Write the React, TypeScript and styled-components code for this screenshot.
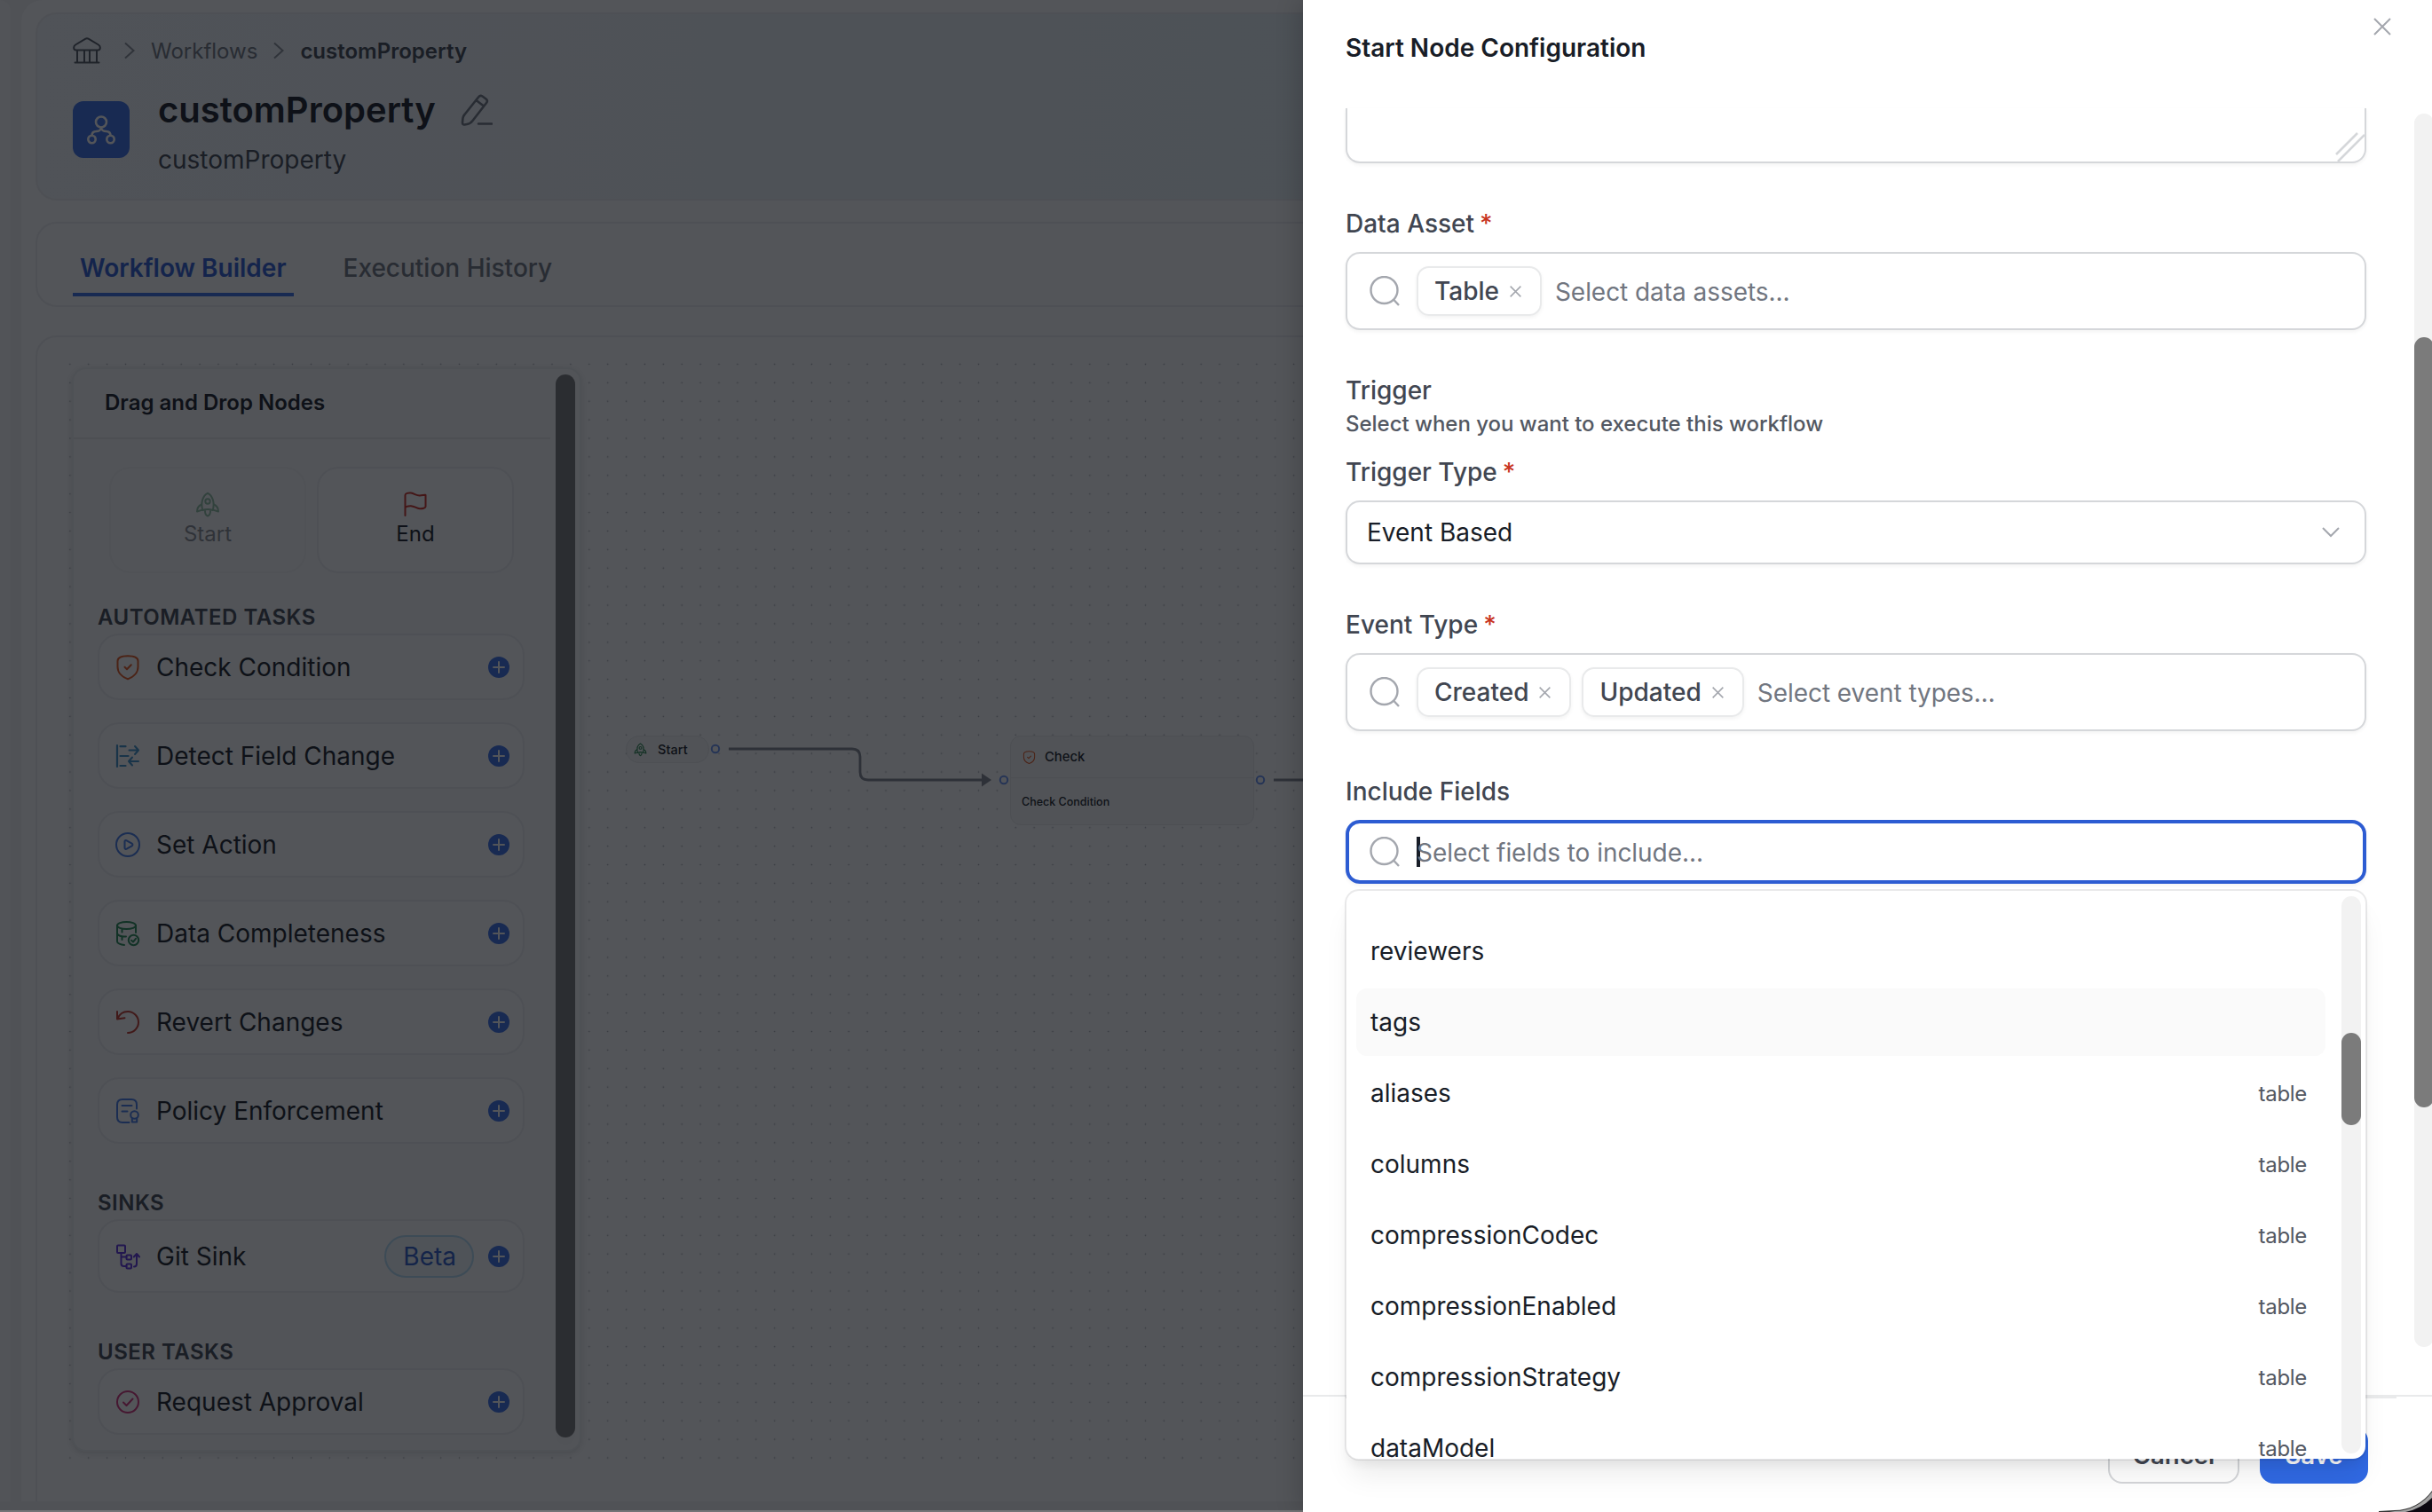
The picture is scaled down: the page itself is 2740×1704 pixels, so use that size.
import React, { useState } from 'react'
import styled, { createGlobalStyle, css } from 'styled-components'

const Colors = {
    textDark: '#181d27',
    textSecondary: '#414651',
    textTertiary: '#535862',
    placeholder: '#717680',
    border: '#d5d7da',
    borderLight: '#e9eaeb',
    brand: '#2d5cd2',
    brandSolid: '#396ee7',
    iconGray: '#a4a7ae',
    error: '#c8341f',
    scrollTrack: '#f2f2f2',
    scrollThumb: '#7b7b7b',
}

type NodeIcon = 'rocket' | 'flag' | 'shield' | 'detect' | 'play' | 'database' | 'revert' | 'policy' | 'git' | 'approve'

const iconColors: Record<NodeIcon, string> = {
    rocket: '#26834b',
    flag: '#cc2d22',
    shield: '#e5581f',
    detect: '#3d92c9',
    play: '#437be6',
    database: '#278a55',
    revert: '#c2362a',
    policy: '#437be6',
    git: '#5c30dc',
    approve: '#d23078',
}

const NodeGlyph: React.FC<{ icon: NodeIcon, size?: number }> = ({ icon, size = 32 }) => (
    <svg
        width={size}
        height={size}
        viewBox="0 0 32 32"
        fill="none"
        stroke={iconColors[icon]}
        strokeWidth={2}
        strokeLinecap="round"
        strokeLinejoin="round"
    >
        {icon === 'rocket' && <>
            <path d="M10.2 23C8 14 10.500 6.500 16 3.800C21.500 6.500 24 14 21.800 23C18 21.600 14 21.600 10.200 23Z" />
            <circle cx="16" cy="13" r="2.700" />
            <path d="M9 16.500C5.500 18 4 20.500 4 24.500L10 22.600M23 16.500C26.500 18 28 20.500 28 24.500L22 22.600M13 24C13 27 14.500 29 16 29.500C17.500 29 19 27 19 24" />
        </>}
        {icon === 'flag' && <path d="M4.500 29V6C4.500 4 8 3.200 11 3.600C15 4.200 17 6.600 21 6.400C24 6.300 27.500 5.200 27.500 6V19C27.500 20.500 24 21.400 21 21.200C17 21 15 18.400 11 18.200C7 18 4.500 19.500 4.500 21" />}
        {icon === 'shield' && <>
            <path d="M4.500 9C4.500 5 8 3.200 16 3.200S27.500 5 27.500 9V15.500C27.500 22 22.500 27 16 29.200C9.500 27 4.500 22 4.500 15.500Z" />
            <path d="M12.500 15.800L15 18.300L19.800 13.300" />
        </>}
        {icon === 'detect' && <>
            <path d="M4 4V28M7.500 5.200H13.500M7.500 16H16.500M7.500 27H13.500" strokeWidth="2.200" />
            <path d="M17.500 9.500H28M24 5L28 9.500L24 14M28 22H17M21 17.500L17 22L21 26.500" />
        </>}
        {icon === 'play' && <>
            <circle cx="16" cy="16" r="13" />
            <path d="M12.500 12.500C12.500 11.300 13.700 10.800 14.700 11.300L20.600 14.700C21.700 15.400 21.700 16.600 20.600 17.300L14.700 20.700C13.700 21.200 12.500 20.700 12.500 19.500Z" />
        </>}
        {icon === 'database' && <>
            <ellipse cx="14.500" cy="7" rx="10.500" ry="4" />
            <path d="M4 7V25C4 27.200 8 28.700 12 28.900M25 7V15M4 16.500C6 18.800 10 19.800 14 19.400M9.500 11.500V14.500M9.500 20.500V23" />
            <circle cx="22.500" cy="23.500" r="5.700" />
            <path d="M20 23.700L22 25.500L25 21.800" />
        </>}
        {icon === 'revert' && <path d="M4 4V12.500L12.500 11.200M4.500 12C6.500 7 11 4 16 4C22.500 4 28 9.400 28 16S22.500 28 16 28" />}
        {icon === 'policy' && <>
            <path d="M17.500 29H10C6 29 4 27 4 23V9C4 5 6 3 10 3H20C24 3 26 5 26 9V13.500M9.500 10H20.500M9.500 16.500H15.500" />
            <circle cx="23.500" cy="20.500" r="4.300" />
            <path d="M20.800 24.200V28.500H26.200V24.200" />
        </>}
        {icon === 'git' && <>
            <rect x="4" y="3.500" width="9" height="8.500" rx="1" />
            <path d="M8.500 12V24C8.500 26 9.500 27 11.500 27H14.500M8.500 16.500H14.500M23 27.500C25.500 27.500 26 26 26 24V14M22.800 16.500L26 13L29 16.500" />
            <rect x="14.500" y="14.500" width="5.500" height="5" rx="1" />
            <rect x="14.500" y="24.500" width="5.500" height="5" rx="1" />
        </>}
        {icon === 'approve' && <>
            <circle cx="16" cy="16" r="12" />
            <path d="M11 16.500L14.500 20L21.500 12.500" />
        </>}
    </svg>
)

const PlusIcon: React.FC = () => (
    <svg width="24" height="24" viewBox="0 0 24 24">
        <circle cx="12" cy="12" r="12" fill={Colors.brandSolid} />
        <path d="M12 6V18M6 12H18" stroke="#fff" strokeWidth="2" strokeLinecap="round" />
    </svg>
)

const ChevronIcon: React.FC = () => (
    <svg width="12" height="20" viewBox="0 0 12 20" fill="none" stroke="#8b8f98" strokeWidth="2">
        <path d="M1 1.500L10.500 10L1 18.500" />
    </svg>
)

const SearchIcon: React.FC = () => (
    <svg width="34" height="34" viewBox="0 0 34 34" fill="none" stroke={Colors.iconGray} strokeWidth="2.400">
        <circle cx="16.500" cy="16" r="15" />
        <path d="M27 26.500L33 33" />
    </svg>
)

const CloseIcon: React.FC<{ size: number }> = ({ size }) => (
    <svg width={size} height={size} viewBox="0 0 20 20" fill="none" stroke={Colors.iconGray} strokeWidth={size > 16 ? 2 : 2.4}>
        <path d="M1 1L19 19M19 1L1 19" />
    </svg>
)

interface ITask {
    label: string
    icon: NodeIcon
    beta?: boolean
}

const taskGroups: { title: string, tasks: ITask[] }[] = [
    {
        title: 'AUTOMATED TASKS',
        tasks: [
            { label: 'Check Condition', icon: 'shield' },
            { label: 'Detect Field Change', icon: 'detect' },
            { label: 'Set Action', icon: 'play' },
            { label: 'Data Completeness', icon: 'database' },
            { label: 'Revert Changes', icon: 'revert' },
            { label: 'Policy Enforcement', icon: 'policy' },
        ],
    },
    { title: 'SINKS', tasks: [{ label: 'Git Sink', icon: 'git', beta: true }] },
    { title: 'USER TASKS', tasks: [{ label: 'Request Approval', icon: 'approve' }] },
]

const fieldOptions = [
    { name: 'reviewers' },
    { name: 'tags' },
    { name: 'aliases', source: 'table' },
    { name: 'columns', source: 'table' },
    { name: 'compressionCodec', source: 'table' },
    { name: 'compressionEnabled', source: 'table' },
    { name: 'compressionStrategy', source: 'table' },
    { name: 'dataModel', source: 'table' },
]

interface IMultiSelectProps {
    tags: string[]
    placeholder: string
    onRemove?: (tag: string) => void
    focused?: boolean
    children?: React.ReactNode
}

const MultiSelect: React.FC<IMultiSelectProps> = ({
    tags,
    placeholder,
    onRemove = () => { },
    focused = false,
    children
}) => (
    <SelectBox $tall={tags.length > 0} $focused={focused}>
        <SearchIcon />
        <TagList>
            {tags.map((tag) => (
                <Tag key={tag}>
                    {tag}
                    <TagRemove onClick={() => onRemove(tag)}><CloseIcon size={13} /></TagRemove>
                </Tag>
            ))}
            {focused && <Caret />}
            <Placeholder $afterTag={tags.length > 0}>{placeholder}</Placeholder>
        </TagList>
        {children}
    </SelectBox>
)

const NodePalette: React.FC = () => (
    <Palette>
        <PaletteContent>
            <PaletteHeader>Drag and Drop Nodes</PaletteHeader>
            <TerminalRow>
                <TerminalCard $disabled><NodeGlyph icon="rocket" />Start</TerminalCard>
                <TerminalCard><NodeGlyph icon="flag" />End</TerminalCard>
            </TerminalRow>
            {taskGroups.map((group) => (
                <TaskGroup key={group.title}>
                    <GroupTitle>{group.title}</GroupTitle>
                    {group.tasks.map((task) => (
                        <TaskCard key={task.label} $tall={task.beta}>
                            <NodeGlyph icon={task.icon} />
                            <TaskLabel>{task.label}</TaskLabel>
                            {task.beta && <BetaBadge>Beta</BetaBadge>}
                            <PlusIcon />
                        </TaskCard>
                    ))}
                </TaskGroup>
            ))}
        </PaletteContent>
        <PaletteScroll><PaletteThumb /></PaletteScroll>
    </Palette>
)

const FlowCanvas: React.FC = () => (
    <Canvas>
        <NodePalette />
        <Edges width="760" height="120" viewBox="708 820 760 120" fill="none">
            <path d="M821 844H960Q969 844 969 853V870Q969 879 978 879H1112" stroke="#83878f" strokeWidth="2.800" />
            <path d="M1106 871.500L1117 879L1106 886.500Z" fill="#83878f" />
            <path d="M1435 879H1468" stroke="#83878f" strokeWidth="2.800" />
            <g stroke="#6590f2" strokeWidth="2" fill="#fff">
                <circle cx="806" cy="844" r="4.200" />
                <circle cx="1131" cy="879" r="4.200" />
                <circle cx="1420" cy="879" r="4.200" />
            </g>
        </Edges>
        <StartNode><NodeGlyph icon="rocket" size={17} />Start</StartNode>
        <CheckNode>
            <CheckNodeHeader><NodeGlyph icon="shield" size={17} />Check</CheckNodeHeader>
            <CheckNodeBody>Check Condition</CheckNodeBody>
        </CheckNode>
    </Canvas>
)

const ConfigDrawer: React.FC = () => {
    const [assets, setAssets] = useState<string[]>(['Table'])
    const [events, setEvents] = useState<string[]>(['Created', 'Updated'])
    const [active, setActive] = useState<string>('tags')

    return (
        <Drawer>
            <DrawerHeader>
                <DrawerTitle>Start Node Configuration</DrawerTitle>
                <CloseButton><CloseIcon size={20} /></CloseButton>
            </DrawerHeader>
            <DrawerBody>
                <Form>
                    <DescriptionBox>
                        <svg width="34" height="34" viewBox="0 0 34 34" stroke={Colors.border} strokeWidth="2.600">
                            <path d="M2 26L26 2M4 34L34 4" />
                        </svg>
                    </DescriptionBox>
                    <Label>Data Asset<Required>*</Required></Label>
                    <MultiSelect
                        tags={assets}
                        placeholder="Select data assets..."
                        onRemove={(tag) => setAssets(assets.filter((a) => a !== tag))} />
                    <SectionTitle>Trigger</SectionTitle>
                    <SectionHint>Select when you want to execute this workflow</SectionHint>
                    <Label $tight>Trigger Type<Required>*</Required></Label>
                    <SingleSelect>
                        Event Based
                        <svg width="20" height="12" viewBox="0 0 20 12" fill="none" stroke={Colors.iconGray} strokeWidth="2">
                            <path d="M1 1L10 10L19 1" />
                        </svg>
                    </SingleSelect>
                    <Label>Event Type<Required>*</Required></Label>
                    <MultiSelect
                        tags={events}
                        placeholder="Select event types..."
                        onRemove={(tag) => setEvents(events.filter((e) => e !== tag))} />
                    <Label>Include Fields</Label>
                    <MultiSelect tags={[]} placeholder="Select fields to include..." focused>
                        <Dropdown>
                            <OptionList>
                                {fieldOptions.map(({ name, source }) => (
                                    <Option key={name} $active={name === active} onMouseEnter={() => setActive(name)}>
                                        {name}
                                        {source && <OptionSource>{source}</OptionSource>}
                                    </Option>
                                ))}
                            </OptionList>
                            <DropdownScroll><DropdownThumb /></DropdownScroll>
                        </Dropdown>
                    </MultiSelect>
                </Form>
                <DrawerScroll><DrawerThumb /></DrawerScroll>
            </DrawerBody>
            <DrawerFooter>
                <FooterRule />
                <FooterActions>
                    <Button>Cancel</Button>
                    <Button $primary>Save</Button>
                </FooterActions>
            </DrawerFooter>
        </Drawer>
    )
}

const App: React.FC = () => (
    <Screen>
        <GlobalStyle />
        <Shell>
            <SideRail />
            <Main>
                <HeaderCard>
                    <Breadcrumb>
                        <svg width="32" height="30" viewBox="0 0 32 30" fill="none" stroke={Colors.textTertiary} strokeWidth="2" strokeLinecap="round">
                            <path d="M3.500 14.500C0.500 14.500 0.500 10 3 8.500L14 1.800Q16 .8 18 1.800L29 8.500C31.500 10 31.500 14.500 28.500 14.500ZM5 15V28M13 15V28M19 15V28M27 15V28M2.500 28.500H29.500" />
                        </svg>
                        <ChevronIcon />
                        <Crumb>Workflows</Crumb>
                        <ChevronIcon />
                        <Crumb $current>customProperty</Crumb>
                    </Breadcrumb>
                    <TitleRow>
                        <TitleTile>
                            <svg width="34" height="34" viewBox="0 0 34 34" fill="none" stroke="#fff" strokeWidth="2.600">
                                <circle cx="17" cy="8.500" r="6" />
                                <circle cx="6.500" cy="28" r="4.200" />
                                <circle cx="27.500" cy="28" r="4.200" />
                                <path d="M17 14.500C17 17.500 14 19 11.500 19C8 19 6.500 21 6.500 23.800M17 14.500C17 17.500 20 19 22.500 19C26 19 27.500 21 27.500 23.800" />
                            </svg>
                        </TitleTile>
                        <div>
                            <Title>
                                customProperty
                                <svg width="36" height="36" viewBox="0 0 36 36" fill="none" stroke="#717680" strokeWidth="2.600" strokeLinecap="round" strokeLinejoin="round">
                                    <path d="M20 3.500Q22 1 24.500 2.500L28.500 5.500Q31 7.500 29 10L13.500 30Q11 33.500 7 34L4.500 34.500Q2 35 2 32L2.500 27Q3 24.500 4.500 23ZM17.500 7L26 13.500M20 33.500H35" />
                                </svg>
                            </Title>
                            <Subtitle>customProperty</Subtitle>
                        </div>
                    </TitleRow>
                </HeaderCard>
                <TabsCard>
                    <Tab $active>Workflow Builder</Tab>
                    <Tab>Execution History</Tab>
                </TabsCard>
                <CanvasCard>
                    <FlowCanvas />
                </CanvasCard>
            </Main>
        </Shell>
        <Mask />
        <ConfigDrawer />
        <WindowCorner width="70" height="70" viewBox="0 0 70 70">
            <path d="M10 69L27.500 68A52 52 0 0 0 70 46V70H10Z" fill="#333" />
            <path d="M22 70L28 69A53 53 0 0 0 70 47.500V70Z" fill="#a3a3a3" />
            <path d="M40 70A57 57 0 0 0 70 54V70Z" fill="#0b0810" />
        </WindowCorner>
    </Screen>
)

export default App

const GlobalStyle = createGlobalStyle`
    * {
        box-sizing: border-box;
    }

    body {
        margin: 0;
        font-family: Inter, "Liberation Sans", sans-serif;
        font-size: 28px;
        color: ${Colors.textDark};
    }
`

const Screen = styled.div`
    position: relative;
    width: 2740px;
    height: 1704px;
    overflow: hidden;
    background: #f3f3f4;
`

const Shell = styled.div`
    display: flex;
    gap: 12px;
    height: 1692px;
`

const SideRail = styled.div`
    flex: none;
    width: 12px;
    background: #fafafa;
    border-top-right-radius: 12px;
`

const Main = styled.main`
    flex: 1;
    padding: 14px 16px 0;
    overflow: hidden;
    background: #fdfdfd;
    border-top-left-radius: 24px;
`

const cardFrame = css`
    border: 2px solid #eeeff0;
    border-radius: 24px;
`

const HeaderCard = styled.section`
    ${cardFrame}
    height: 212px;
    padding: 23px 40px 0;
    background: linear-gradient(90deg, #f3f7fa 0%, #ecf3f8 50%, #e2eef6 100%);
`

const Breadcrumb = styled.nav`
    display: flex;
    align-items: center;
    height: 36px;
    font-size: 24px;

    svg:first-child {
        margin-right: 12px;
    }

    svg:not(:first-child) {
        margin: 0 18px 0 14px;
    }
`

const Crumb = styled.span<{ $current?: boolean }>`
    color: ${({ $current }) => ($current ? Colors.textSecondary : Colors.placeholder)};
    font-weight: ${({ $current }) => ($current ? 600 : 400)};

    & + svg {
        margin-left: 18px !important;
    }
`

const TitleRow = styled.div`
    display: flex;
    gap: 32px;
    margin-top: 25px;
`

const TitleTile = styled.div`
    display: flex;
    align-items: center;
    justify-content: center;
    width: 64px;
    height: 64px;
    margin-top: 14px;
    border-radius: 12px;
    background: ${Colors.brandSolid};
`

const Title = styled.h1`
    display: flex;
    align-items: center;
    gap: 28px;
    margin: 0;
    font-size: 40px;
    font-weight: 600;
    line-height: 48px;
`

const Subtitle = styled.div`
    margin-top: 10px;
    line-height: 44px;
    color: ${Colors.textSecondary};
`

const TabsCard = styled.section`
    ${cardFrame}
    display: flex;
    gap: 48px;
    height: 96px;
    margin-top: 24px;
    padding: 22px 40px 0;
`

const Tab = styled.div<{ $active?: boolean }>`
    height: 60px;
    padding: 0 8px;
    line-height: 57px;
    font-weight: ${({ $active }) => ($active ? 600 : 500)};
    color: ${({ $active }) => ($active ? Colors.brand : Colors.placeholder)};
    border-bottom: 4px solid ${({ $active }) => ($active ? Colors.brandSolid : 'transparent')};
`

const CanvasCard = styled.section`
    ${cardFrame}
    height: 1400px;
    margin-top: 32px;
    padding: 18px 23px;
`

const Canvas = styled.div`
    position: relative;
    display: flex;
    align-items: flex-start;
    height: 1258px;
    padding: 16px;
    background-image: radial-gradient(circle at center, #a4a7ad 0.6px, transparent 1.1px);
    background-size: 20.9px 20.9px;
    background-position: 3.4px 2px;
`

const Palette = styled.aside`
    display: flex;
    width: 574px;
    height: 1222px;
    background: #fbfbfb;
    border: 2px solid #eef0f1;
    border-radius: 16px;
    box-shadow: 0 2px 6px rgba(10, 13, 18, 0.12);
    overflow: hidden;
`

const PaletteContent = styled.div`
    width: 537px;
`

const PaletteHeader = styled.div`
    height: 79px;
    padding-left: 35px;
    line-height: 76px;
    font-size: 24px;
    font-weight: 600;
    border-bottom: 2px solid ${Colors.borderLight};
`

const TerminalRow = styled.div`
    display: flex;
    gap: 12px;
    padding: 31px 40px;
`

const TerminalCard = styled.div<{ $disabled?: boolean }>`
    display: flex;
    flex-direction: column;
    align-items: center;
    width: 222px;
    height: 120px;
    padding-top: 24px;
    font-size: 24px;
    line-height: 36px;
    background: #fdfdfd;
    border: 2px solid #eeeff0;
    border-radius: 24px;
    opacity: ${({ $disabled }) => ($disabled ? 0.5 : 1)};
`

const TaskGroup = styled.div`
    padding: 0 29px 0 27px;
    margin-bottom: 48px;
`

const GroupTitle = styled.div`
    height: 37px;
    line-height: 38px;
    font-size: 24px;
    font-weight: 600;
    letter-spacing: 0.5px;
    color: ${Colors.textSecondary};
`

const TaskCard = styled.div<{ $tall?: boolean }>`
    display: flex;
    align-items: center;
    height: ${({ $tall }) => ($tall ? 83 : 75)}px;
    padding: 0 15px 0 16px;
    background: #fdfdfd;
    border: 2px solid #eeeff0;
    border-radius: 24px;

    & + & {
        margin-top: 25px;
    }
`

const TaskLabel = styled.span`
    flex: 1;
    margin-left: 16px;
`

const BetaBadge = styled.span`
    height: 48px;
    margin-right: 16px;
    padding: 0 18px 0 19px;
    line-height: 45px;
    color: #2d5cc8;
    background: #f0f7fc;
    border: 2px solid #b4dcf4;
    border-radius: 24px;
`

const PaletteScroll = styled.div`
    width: 22px;
    height: 1206px;
    margin: 6px 0 0 6px;
    border-radius: 11px;
    background: #f7f7f7;
`

const PaletteThumb = styled.div`
    height: 1198px;
    border-radius: 11px;
    background: ${Colors.scrollThumb};
`

const Edges = styled.svg`
    position: absolute;
    left: 643px;
    top: 422px;
`

const flowNode = css`
    position: absolute;
    top: 431px;
    background: #f8f8f8;
    border: 1px solid ${Colors.borderLight};
    font-weight: 500;
`

const StartNode = styled.div`
    ${flowNode}
    left: 640px;
    display: flex;
    align-items: center;
    gap: 11px;
    width: 94px;
    height: 31px;
    padding-left: 7px;
    font-size: 14.6px;
    border-radius: 15px;
`

const CheckNode = styled.div`
    ${flowNode}
    left: 1073px;
    width: 275px;
    height: 101px;
    border-radius: 12px;
`

const CheckNodeHeader = styled.div`
    display: flex;
    align-items: center;
    gap: 9px;
    height: 47px;
    padding-left: 12px;
    font-size: 14.8px;
    border-bottom: 1px solid ${Colors.borderLight};
`

const CheckNodeBody = styled.div`
    padding-left: 12px;
    line-height: 54px;
    font-size: 12.5px;
`

const Mask = styled.div`
    position: absolute;
    inset: 0;
    background: rgba(10, 13, 18, 0.7);
    border-bottom: 2px solid rgba(255, 255, 255, 0.2);
`

const Drawer = styled.aside`
    position: absolute;
    top: 0;
    right: 0;
    display: flex;
    flex-direction: column;
    width: 1272px;
    height: 1704px;
    background: #fff;
    box-shadow: -6px 0 24px rgba(0, 0, 0, 0.16);
`

const DrawerHeader = styled.header`
    display: flex;
    justify-content: space-between;
    align-items: flex-start;
    height: 122px;
    padding: 0 46px 0 48px;
`

const DrawerTitle = styled.h2`
    margin: 34px 0 0;
    font-size: 28px;
    font-weight: 600;
    line-height: 40px;
`

const CloseButton = styled.button`
    display: flex;
    margin-top: 20px;
    padding: 0;
    border: 0;
    background: none;
    cursor: pointer;
`

const DrawerBody = styled.div`
    display: flex;
    height: 1450px;
`

const Form = styled.div`
    flex: 1;
    padding: 0 54px 0 48px;
`

const controlFrame = css`
    background: #fff;
    border: 2px solid ${Colors.border};
    border-radius: 16px;
    box-shadow: 0 2px 4px rgba(10, 13, 18, 0.05);
`

const DescriptionBox = styled.div`
    ${controlFrame}
    display: flex;
    justify-content: flex-end;
    align-items: flex-end;
    height: 62px;
    border-top: 0;
    border-top-left-radius: 0;
    border-top-right-radius: 0;
`

const Label = styled.div<{ $tight?: boolean }>`
    margin: ${({ $tight }) => ($tight ? 16 : 48)}px 0 12px;
    font-weight: 500;
    line-height: 40px;
    color: ${Colors.textSecondary};
`

const Required = styled.span`
    margin-left: 6px;
    color: ${Colors.error};
`

const SectionTitle = styled.div`
    margin-top: 48px;
    font-weight: 500;
    line-height: 40px;
    color: ${Colors.textSecondary};
`

const SectionHint = styled.div`
    font-size: 24px;
    font-weight: 500;
    line-height: 36px;
    letter-spacing: -0.02px;
    color: ${Colors.textTertiary};
`

const SelectBox = styled.div<{ $tall: boolean, $focused: boolean }>`
    ${controlFrame}
    position: relative;
    display: flex;
    align-items: center;
    gap: 19px;
    height: ${({ $tall }) => ($tall ? 88 : 72)}px;
    padding-left: 25px;

    ${({ $focused }) => $focused && css`
        padding-left: 23px;
        border: 4px solid ${Colors.brand};
    `}
`

const TagList = styled.div`
    display: flex;
    align-items: center;
    gap: 12px;
`

const Tag = styled.span`
    display: flex;
    align-items: center;
    gap: 12px;
    height: 56px;
    padding: 0 21px 0 18px;
    font-weight: 500;
    color: ${Colors.textSecondary};
    border: 2px solid ${Colors.borderLight};
    border-radius: 14px;
    box-shadow: 0 2px 4px rgba(10, 13, 18, 0.05);
`

const TagRemove = styled.button`
    display: flex;
    padding: 0;
    border: 0;
    background: none;
    cursor: pointer;
`

const Caret = styled.span`
    width: 4px;
    height: 34px;
    margin-right: -16px;
    background: ${Colors.textDark};
`

const Placeholder = styled.span<{ $afterTag: boolean }>`
    margin-left: ${({ $afterTag }) => ($afterTag ? 3 : 0)}px;
    padding-top: 2px;
    letter-spacing: -0.05px;
    color: ${Colors.placeholder};
`

const SingleSelect = styled.div`
    ${controlFrame}
    display: flex;
    align-items: center;
    justify-content: space-between;
    height: 72px;
    padding: 0 28px 0 22px;
`

const Dropdown = styled.div`
    position: absolute;
    z-index: 2;
    top: 74px;
    left: -5px;
    display: flex;
    width: 1152px;
    height: 644px;
    background: #fff;
    background-clip: padding-box;
    border: 2px solid rgba(10, 13, 18, 0.09);
    border-radius: 16px;
    box-shadow: 0 24px 32px -8px rgba(10, 13, 18, 0.08), 0 8px 12px -4px rgba(10, 13, 18, 0.06);
    overflow: hidden;
`

const OptionList = styled.div`
    display: flex;
    flex-direction: column;
    gap: 4px;
    width: 1103px;
    padding: 30px 0 0 11px;
`

const Option = styled.div<{ $active: boolean }>`
    display: flex;
    flex: none;
    align-items: center;
    justify-content: space-between;
    height: 76px;
    padding: 0 21px 0 16px;
    border-radius: 12px;
    background: ${({ $active }) => ($active ? '#fafafa' : 'transparent')};
`

const OptionSource = styled.span`
    font-size: 24px;
    letter-spacing: -0.3px;
    color: ${Colors.textTertiary};
`

const DropdownScroll = styled.div`
    width: 22px;
    height: 628px;
    margin: 6px 0 0 18px;
    padding-top: 154px;
    border-radius: 11px;
    background: ${Colors.scrollTrack};
`

const DropdownThumb = styled.div`
    height: 104px;
    border-radius: 11px;
    background: ${Colors.scrollThumb};
`

const DrawerScroll = styled.div`
    flex: none;
    width: 22px;
    height: 1390px;
    margin: 6px -2px 0 0;
    padding-top: 252px;
    border-radius: 11px;
    background: ${Colors.scrollTrack};
`

const DrawerThumb = styled.div`
    height: 868px;
    border-radius: 11px;
    background: ${Colors.scrollThumb};
`

const DrawerFooter = styled.footer`
    height: 132px;
    border-top: 2px solid ${Colors.borderLight};
`

const FooterRule = styled.div`
    width: 1184px;
    height: 2px;
    margin-left: 48px;
    background: ${Colors.borderLight};
`

const FooterActions = styled.div`
    display: flex;
    justify-content: flex-end;
    gap: 23px;
    padding: 32px 72px 0 0;
`

const Button = styled.button<{ $primary?: boolean }>`
    width: ${({ $primary }) => ($primary ? 122 : 148)}px;
    height: 64px;
    padding: 0;
    font: 600 27.5px Inter, "Liberation Sans", sans-serif;
    color: ${({ $primary }) => ($primary ? '#fff' : Colors.textSecondary)};
    background: ${({ $primary }) => ($primary ? '#3069e3' : '#fff')};
    border: 2px solid ${({ $primary }) => ($primary ? '#3069e3' : Colors.border)};
    border-radius: 16px;
`

const WindowCorner = styled.svg`
    position: absolute;
    right: 0;
    bottom: 0;
`
